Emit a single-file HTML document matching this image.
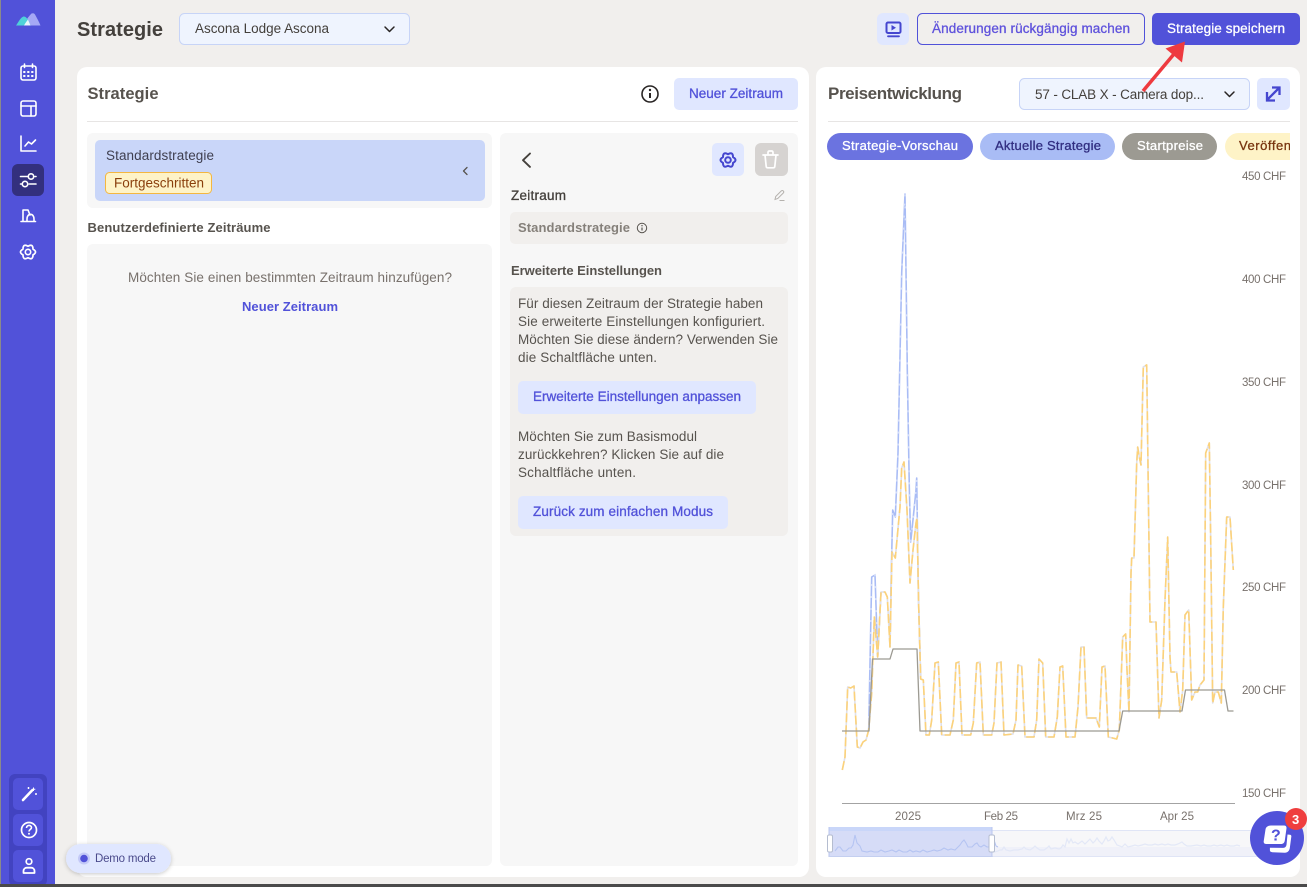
<!DOCTYPE html>
<html lang="de"><head><meta charset="utf-8"><title>Strategie</title>
<style>
html,body{margin:0;padding:0;width:1307px;height:887px;overflow:hidden;background:#f1efed}
svg{display:block;position:absolute;left:0;top:0}
text{font-family:"Liberation Sans",sans-serif;font-size:13.5px;fill:#57534e;white-space:pre}
.m{stroke-width:.3px;paint-order:stroke}
.s{font-weight:700}
.ax{font-size:11.5px;fill:#78716c}
.ic{fill:none;stroke:#fff;stroke-width:1.6;stroke-linecap:round;stroke-linejoin:round}
</style></head><body>
<svg width="1307" height="887" viewBox="0 0 1307 887" xmlns="http://www.w3.org/2000/svg">
<defs>
<clipPath id="chips"><rect x="820" y="125" width="470" height="40"/></clipPath>
<filter id="sh" x="-20%" y="-30%" width="140%" height="170%"><feDropShadow dx="0" dy="1" stdDeviation="2" flood-color="#000" flood-opacity=".22"/></filter>
<path id="gear" d="M0-5.800Q5-8.600 5-2.900Q10 0 5 2.900Q5 8.600 0 5.800Q-5 8.600-5 2.900Q-10 0-5-2.900Q-5-8.600 0-5.800Z"/>
<path id="yl" d="M842.3 770L845 757 847.7 687 850.7 688 854 686 857.3 747 860 748 863 742 866 740 868.7 730 871.7 693 874.3 617 877.7 657 881 592 885 592 887.3 597 890 647 892 552 895.3 558 900 507 901.7 468 904 462 907 510 910 583 913 550 916 523 917 518 918.7 607 920.7 679 923.3 680 926 735 929.3 735 931.7 720 935 663 938.3 662 941.7 735 950 735 953.3 720 956 663 959 662 962 735 970.7 735 973.3 723 976.7 663 980 662 983.3 735 991.7 735 994 723 997 663 1001 662 1004 735 1013 734 1016 720 1018 665 1021.7 666 1025 737 1034 737 1036.7 720 1039 659 1042.7 663 1045.7 737 1054 737 1057.3 717 1060 667 1062.7 666 1066 737 1075 737 1078 707 1081 647 1084 647 1086.7 718 1096 718 1099.3 727 1102 667 1105 666 1108.3 737 1116.7 739 1119.3 730 1122.7 637 1125.7 634 1127 670 1129 712 1131 573 1131.7 558 1134 558 1136.7 463 1137.7 447 1139.3 457 1141 465 1143.3 367 1146.7 365 1148.3 490 1150 622 1156 622 1159 718 1161.7 700 1165 600 1167.7 537 1170 657 1171 672 1176.7 672 1180 712 1182.7 690 1185 615 1188.7 610 1191.7 700 1195 692 1197.7 692 1200 685 1204 680 1205.7 453 1209.3 443 1210.7 540 1212.7 703 1215 692 1218.3 692 1221.3 703 1223.3 607 1226.7 517 1230 517 1233.3 570"/>
<path id="bl" d="M868.700 730L871.700 577 875 575 877.700 657 881 592M890 647L891 587 892.700 510 895.300 517 898 453 901.700 273 905 194 907.300 370 909.300 487 910.700 542 914 510 916 490 916.700 478 918.300 590 920.700 679"/>
</defs>

<!-- sidebar -->
<rect x="0" y="0" width="1.5" height="887" fill="#8a8a8a"/>
<rect x="1" y="0" width="54" height="887" fill="#5152d9"/>
<path d="M23 25.500C25 22 28 17 31.500 13.500C33 13 34 13 35 14.500C37 18 39 22 40.500 25.500Z" fill="#a5a8f5"/>
<path d="M16 25.500C18 23 20 18 23 16.700C25 15.700 27 18 29 21L30.500 25.500Z" fill="#4fd1d9"/>
<path d="M24 25.500C25 23.500 26.500 21.500 28 19.500L30.500 25.500Z" fill="#e8f4fb"/>
<g class="ic">
<rect x="21" y="66" width="15" height="14" rx="2"/><path d="M24.500 64v3.500M32.500 64v3.500"/><path d="M24 72h0.600M28 72h0.600M32 72h0.600M24 76h0.600M28 76h0.600M32 76h0.600" stroke-width="2"/>
<rect x="21" y="101" width="15" height="15" rx="2"/><path d="M21 106h15M31 106v10"/>
<path d="M21 136v15h15M25 146l3.500-4 3 2 4-4"/>
<rect x="12" y="164" width="32" height="32" rx="6" fill="#33307e" stroke="none"/>
<path d="M20.500 176.500H28M35 176.500H36M20.500 184H21.500M29 184H36"/><circle cx="31" cy="176.500" r="2.700"/><circle cx="25" cy="184" r="2.700"/>
<path d="M21 221.500h14.500M23 221.500V210h5l2 5M27 221.500v-2.500c0-2.800 1.500-4.700 3.500-4.700s3.500 2 3.500 4.700v2.500"/>
<use href="#gear" transform="translate(28 252)" stroke-width="1.700"/><circle cx="28" cy="252" r="2.700"/>
</g>
<rect x="9" y="774" width="38" height="112" rx="6" fill="#4243c0"/>
<rect x="13" y="778" width="30" height="32" rx="5" fill="#5152d9"/>
<rect x="13" y="814" width="30" height="32" rx="5" fill="#5152d9"/>
<rect x="13" y="850" width="30" height="32" rx="5" fill="#5152d9"/>
<path d="M23 800l9-9.500" stroke="#fff" stroke-width="2.600" stroke-linecap="round"/>
<path d="M33.500 787.500v3.500M31.800 789.200h3.500M28.500 787v2M27.500 788h2M36 793v2M35 794h2" stroke="#fff" stroke-width="1"/>
<circle cx="29" cy="830" r="7.500" fill="none" stroke="#fff" stroke-width="1.700"/>
<path d="M26.500 828c0-3.500 5-3.200 5-.4 0 1.800-2.500 1.800-2.500 3.900" fill="none" stroke="#fff" stroke-width="1.600"/><circle cx="29" cy="833.800" r="1" fill="#fff"/>
<circle cx="29" cy="861.500" r="2.800" fill="none" stroke="#fff" stroke-width="1.700"/>
<path d="M23.500 873v-2c0-2 1.500-3.300 3.500-3.300h4c2 0 3.500 1.300 3.500 3.300v2z" fill="none" stroke="#fff" stroke-width="1.800" stroke-linejoin="round"/>

<!-- top bar -->
<text x="77" y="36" font-weight="700" style="font-size:20px;fill:#44403c" textLength="86">Strategie</text>
<rect x="179.500" y="13.500" width="230" height="31" rx="5" fill="#eff4fe" stroke="#c7d4f7"/>
<text x="195" y="33" style="fill:#44403c" textLength="134">Ascona Lodge Ascona</text>
<path d="M385 27l4.500 4.500 4.500-4.500" fill="none" stroke="#292524" stroke-width="1.500" stroke-linecap="round" stroke-linejoin="round"/>
<rect x="877" y="13" width="32" height="32" rx="6" fill="#e0e7ff"/>
<rect x="886.500" y="22.500" width="14" height="10.500" rx="1.500" fill="none" stroke="#4546cf" stroke-width="2"/>
<path d="M891.500 25v5.500l4.500-2.700z" fill="#4546cf"/><path d="M888 36.300h11" stroke="#4546cf" stroke-width="1.800" stroke-linecap="round"/>
<rect x="917.500" y="13.500" width="227" height="31" rx="5" fill="none" stroke="#5152d9"/>
<text x="932" y="33" class="m" style="fill:#5f52dc;stroke:#5f52dc" textLength="198">Änderungen rückgängig machen</text>
<rect x="1152" y="13" width="148" height="32" rx="5" fill="#5152d9"/>
<text x="1167" y="33" class="m" style="fill:#fff;stroke:#fff" textLength="118">Strategie speichern</text>

<!-- left card -->
<rect x="77" y="67" width="732" height="810" rx="10" fill="#fff"/>
<text x="87.500" y="99" class="s" style="font-size:16.500px;fill:#57534e" textLength="71">Strategie</text>
<circle cx="650" cy="94" r="8" fill="none" stroke="#292524" stroke-width="1.600"/>
<path d="M650 93v5" stroke="#292524" stroke-width="2"/><circle cx="650" cy="90" r="1.200" fill="#292524"/>
<rect x="674" y="78" width="124" height="32" rx="5" fill="#e0e7ff"/>
<text x="689" y="98" class="m" style="fill:#5152d9;stroke:#5152d9" textLength="94">Neuer Zeitraum</text>
<rect x="87" y="121" width="711" height="1" fill="#e7e5e4"/>
<rect x="87" y="133" width="405" height="75" rx="6" fill="#f7f7f7"/>
<rect x="95" y="140" width="390" height="61" rx="5" fill="#c9d6f9"/>
<text x="106" y="160" style="fill:#3f3f50" textLength="108">Standardstrategie</text>
<rect x="105.500" y="172.500" width="106" height="21" rx="4" fill="#fef3c7" stroke="#f4b740"/>
<text x="114" y="187.500" style="fill:#8a3f0c" textLength="90">Fortgeschritten</text>
<path d="M467 167.500l-3.500 3.500 3.500 3.500" fill="none" stroke="#57534e" stroke-width="1.300" stroke-linecap="round" stroke-linejoin="round"/>
<text x="87.500" y="232" class="s" style="font-size:13px;fill:#57534e" textLength="183">Benutzerdefinierte Zeiträume</text>
<rect x="87" y="244" width="405" height="622" rx="6" fill="#f7f7f7"/>
<text x="128" y="282" style="fill:#78716c" textLength="324">Möchten Sie einen bestimmten Zeitraum hinzufügen?</text>
<text x="242" y="311" class="s" style="font-size:13px;fill:#5152d9" textLength="96">Neuer Zeitraum</text>

<rect x="500" y="133" width="298" height="733" rx="6" fill="#f7f7f7"/>
<path d="M530 153.500l-7 6.700 7 6.700" fill="none" stroke="#44403c" stroke-width="1.900" stroke-linecap="round" stroke-linejoin="round"/>
<rect x="712" y="143" width="32" height="33" rx="5" fill="#e0e7ff"/>
<use href="#gear" transform="translate(728 160)" fill="none" stroke="#4546cf" stroke-width="2" stroke-linejoin="round"/><circle cx="728" cy="160" r="2.800" fill="none" stroke="#4546cf" stroke-width="2"/>
<rect x="755" y="143" width="33" height="33" rx="6" fill="#d6d3d1"/>
<path d="M763 155h15M768 155v-2.500c0-1 .5-1.500 1.500-1.500h2c1 0 1.500.5 1.500 1.500v2.500M765 155l1.200 11.500c.1.800.6 1.300 1.500 1.300h5.600c.9 0 1.400-.5 1.500-1.300L776 155" fill="none" stroke="#fff" stroke-width="1.700" stroke-linecap="round" stroke-linejoin="round"/>
<text x="511" y="200" class="m" style="fill:#44403c;stroke:#44403c" textLength="55">Zeitraum</text>
<path d="M775 199.500l.7-3 5.500-5.500c.7-.6 1.500-.6 2.100 0s.6 1.400 0 2l-5.500 5.500-2.800 1zM779.500 200.500h5" fill="none" stroke="#b5b2ae" stroke-width="1"/>
<rect x="510" y="212" width="278" height="32" rx="5" fill="#f1efed"/>
<text x="518" y="232" class="s" style="font-size:13px;fill:#85807a" textLength="112">Standardstrategie</text>
<circle cx="642" cy="228" r="4.700" fill="none" stroke="#57534e" stroke-width="1"/><path d="M642 227.500v3" stroke="#57534e" stroke-width="1.200"/><circle cx="642" cy="225.700" r=".7" fill="#57534e"/>
<text x="511" y="275" class="s" style="font-size:13px;fill:#57534e" textLength="151">Erweiterte Einstellungen</text>
<rect x="510" y="287" width="278" height="249" rx="6" fill="#f1efed"/>
<g style="fill:#57534e">
<text x="518" y="308" textLength="245">Für diesen Zeitraum der Strategie haben</text>
<text x="518" y="326" textLength="247">Sie erweiterte Einstellungen konfiguriert.</text>
<text x="518" y="344" textLength="260">Möchten Sie diese ändern? Verwenden Sie</text>
<text x="518" y="362" textLength="139">die Schaltfläche unten.</text>
<text x="518" y="441" textLength="179">Möchten Sie zum Basismodul</text>
<text x="518" y="459" textLength="206">zurückkehren? Klicken Sie auf die</text>
<text x="518" y="477" textLength="118">Schaltfläche unten.</text>
</g>
<rect x="518" y="381" width="238" height="33" rx="5" fill="#e0e7ff"/>
<text x="533" y="401" class="m" style="fill:#5152d9;stroke:#5152d9" textLength="208">Erweiterte Einstellungen anpassen</text>
<rect x="518" y="496" width="210" height="33" rx="5" fill="#e0e7ff"/>
<text x="533" y="516" class="m" style="fill:#5152d9;stroke:#5152d9" textLength="180">Zurück zum einfachen Modus</text>

<!-- right card -->
<rect x="816" y="67" width="484" height="810" rx="10" fill="#fff"/>
<text x="828" y="99" class="s" style="font-size:17px;fill:#57534e" textLength="134">Preisentwicklung</text>
<rect x="1019.500" y="78.500" width="230" height="31" rx="5" fill="#eff4fe" stroke="#c7d4f7"/>
<text x="1035" y="99" style="fill:#44403c" textLength="169">57 - CLAB X - Camera dop...</text>
<path d="M1225 92l4.500 4.500 4.500-4.500" fill="none" stroke="#292524" stroke-width="1.500" stroke-linecap="round" stroke-linejoin="round"/>
<rect x="1257" y="78" width="33" height="32" rx="5" fill="#e0e7ff"/>
<path d="M1267 100l12-12M1272 87.500h7.500v7.500M1267 92v8.500h8" fill="none" stroke="#4546cf" stroke-width="2.300"/>
<rect x="828" y="121" width="462" height="1" fill="#e7e5e4"/>
<g clip-path="url(#chips)">
<rect x="827" y="133" width="146" height="27" rx="13.500" fill="#6b73e0"/>
<text x="842" y="150" class="m" style="fill:#fff;stroke:#fff;font-size:13px" textLength="116">Strategie-Vorschau</text>
<rect x="980" y="133" width="135" height="27" rx="13.500" fill="#a9bcf5"/>
<text x="995" y="150" class="m" style="fill:#312e81;stroke:#312e81;font-size:13px" textLength="106">Aktuelle Strategie</text>
<rect x="1122" y="133" width="95" height="27" rx="13.500" fill="#9c9a92"/>
<text x="1137" y="150" class="m" style="fill:#fff;stroke:#fff;font-size:13px" textLength="66">Startpreise</text>
<rect x="1225" y="133" width="120" height="27" rx="13.500" fill="#fef3c7"/>
<text x="1239" y="150" class="m" style="fill:#78350f;stroke:#78350f;font-size:13px" textLength="52">Veröffen</text>
</g>

<!-- chart -->
<text x="1242" y="180" class="ax" textLength="44">450 CHF</text>
<text x="1242" y="283" class="ax" textLength="44">400 CHF</text>
<text x="1242" y="386" class="ax" textLength="44">350 CHF</text>
<text x="1242" y="489" class="ax" textLength="44">300 CHF</text>
<text x="1242" y="591" class="ax" textLength="44">250 CHF</text>
<text x="1242" y="694" class="ax" textLength="44">200 CHF</text>
<text x="1242" y="797" class="ax" textLength="44">150 CHF</text>
<use href="#bl" fill="none" stroke="#a9bcf5" stroke-width="1.600" stroke-linejoin="round"/>
<use href="#bl" fill="none" stroke="#d5def9" stroke-width="1.600" stroke-dasharray="2 10"/>
<use href="#yl" fill="none" stroke="#dfdfe8" stroke-width="1.600" stroke-linejoin="round"/>
<use href="#yl" fill="none" stroke="#fcd27a" stroke-width="1.600" stroke-linejoin="round" stroke-dasharray="9 3"/>
<path d="M842 731H869L872.500 659H890L893 649H917L920 731H1119L1122.700 711H1182L1185.500 690H1224.500L1228 711H1233.500" fill="none" stroke="#9c9a92" stroke-width="1.300" stroke-linejoin="round"/>
<rect x="842" y="803" width="393" height="1" fill="#a3a3a3"/>
<text x="895" y="820" class="ax" textLength="26">2025</text>
<text x="984" y="820" class="ax" textLength="34">Feb 25</text>
<text x="1066" y="820" class="ax" textLength="36">Mrz 25</text>
<text x="1160" y="820" class="ax" textLength="34">Apr 25</text>

<!-- navigator -->
<rect x="992" y="830.500" width="268" height="26" fill="#f7f7f9" stroke="#e0e5f6"/>
<rect x="993" y="847" width="266" height="9" fill="#f0f1f9"/>
<path d="M992 851l3 1 3-1 2-1 2 0 2-3 2 3 4 1 4-1 4 0 4-1 2-2 2 2 4 1 3-2 2-2 2 2 3 2 4 0 3-2 2-2 2 3 4-1 4 1 2-1 2-3 2 2 2-8 2 4 2-4 2 4 2-1 3 2 4-3 3 3 2-2 3-3 3 4 2-2 2-3 2 3 3 3 2-3 2-4 2 4 2-1 2-3 2 3 3 5 3 1 2 1 3-3 3 3 4-1 3-1 3 1 4-1 3-1 3 1 4 0 3-1 3 1 4-1 3 1 3-1 3 1 4 0 3-1 2-1 2-1 2 2 3 2 4 0 6-1 4 1 3-1 3 1 4 0 3-1 3 1 4-1 3 1 3-1 3 1 4 0 3-1 3 1" fill="none" stroke="#e3e8f7" stroke-width="1.200"/>
<rect x="829" y="827" width="163" height="30" fill="#d6dcf7"/>
<rect x="829" y="827" width="163" height="4" fill="#c9d6f9"/>
<path d="M829 827V857M992 827V857" stroke="#b9c6ee"/>
<path d="M829 856.500H992" stroke="#c4cff0"/>
<path d="M835 851l3-4 2 0 3 4 3 0 3-3 2 0 2-3 2-10 2 8 3 3 2 5 5 1 4-1 3 1 4 0 3-2 4 2 4-1 3-1 4 2 3-2 4 2 4 0 3-2 3 2 3-1 4 1 3-2 4 2 4-1 3-1 3 1 4-1 3-2 4 2 3-1 4 1 3-3 2-2 2-3 2-2 2 3 2 4 4 0 3-3 2-1 2 3 2 1 3-2 3 2 3 0 2-2 2-5 2 6 2 1" fill="none" stroke="#b5c4f2" stroke-width="1.100"/>
<rect x="827.500" y="835" width="5" height="17" rx="1.500" fill="#fff" stroke="#b5bdd0"/>
<rect x="989" y="835" width="5.500" height="17" rx="1.500" fill="#fff" stroke="#b5bdd0"/>

<!-- bottom edge -->
<rect x="0" y="884" width="1307" height="3" fill="#4a4a4a"/>

<!-- arrow -->
<path d="M1143 91L1174 54" stroke="#ee3a3f" stroke-width="3.500"/>
<path d="M1185 41.500L1165.500 48.500 1182 62.500Z" fill="#ee3a3f"/>

<!-- demo pill -->
<rect x="66" y="844" width="105" height="29" rx="14.500" fill="#e0e7ff" filter="url(#sh)"/>
<circle cx="84" cy="858.500" r="6" fill="#c3c9f7"/><circle cx="84" cy="858.500" r="3.800" fill="#5152d9"/>
<text x="95" y="862" style="font-size:11.500px;fill:#4b4b8c" textLength="61">Demo mode</text>

<!-- chat bubble -->
<circle cx="1277" cy="838" r="27" fill="#5152d9"/>
<path d="M1287.500 834.500l2.500.3c1 .2 1.500.8 1.300 1.900l-1.500 11.300c-.4 2.800-2.200 4.700-5 4.700l-12.500-.5c-1.800 0-2.500-1-2.400-2.500v-1.900l13 .1c2 0 3.200-1 3.600-3z" fill="#fff"/>
<path d="M1271 825.500h13c1.800 0 2.700 1 2.500 2.800l-1.700 12.200c-.3 2.200-1.700 3.500-3.800 3.500H1266c-1.700 0-2.500-1-2.300-2.700l1.800-11.800c.3-2.400 2.500-4 5.500-4z" fill="#fff"/>
<text x="1271" y="840.500" class="s" style="font-size:16px;fill:#5152d9">?</text>
<circle cx="1296" cy="819" r="11" fill="#ef3e3e"/>
<text x="1292" y="824" class="s" style="font-size:13px;fill:#fff">3</text>
</svg>
</body></html>
